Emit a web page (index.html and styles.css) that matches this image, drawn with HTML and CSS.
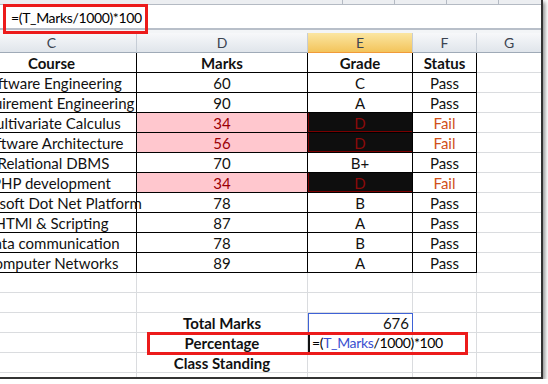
FILE: index.html
```html
<!DOCTYPE html>
<html>
<head>
	<meta charset="utf-8">
	<title>Marks sheet</title>
	<link rel="stylesheet" href="styles.css">
</head>
<body>

	<div class="frame">
		<div class="ribbon">
			<span class="sep"></span><span class="sep"></span><span class="sep"></span><span class="sep"></span>
		</div>
		<div class="fx">=(T_Marks/1000)*100</div>
		<div class="fx-gap"></div>

		<div class="sheet">
			<!-- column headers -->
			<div class="hd">C</div>
			<div class="hd">D</div>
			<div class="hd hd-on">E</div>
			<div class="hd">F</div>
			<div class="hd">G</div>

			<div class="c t b">Course</div>
			<div class="c t b">Marks</div>
			<div class="c t b">Grade</div>
			<div class="c t b">Status</div>
			<div class="c"></div>

			<div class="c t">Software Engineering</div>
			<div class="c t">60</div>
			<div class="c t">C</div>
			<div class="c t">Pass</div>
			<div class="c"></div>

			<div class="c t">Requirement Engineering</div>
			<div class="c t">90</div>
			<div class="c t">A</div>
			<div class="c t">Pass</div>
			<div class="c"></div>

			<div class="c t">Multivariate Calculus</div>
			<div class="c t low">34</div>
			<div class="c t dark">D</div>
			<div class="c t fail">Fail</div>
			<div class="c"></div>

			<div class="c t">Software Architecture</div>
			<div class="c t low">56</div>
			<div class="c t dark">D</div>
			<div class="c t fail">Fail</div>
			<div class="c"></div>

			<div class="c t">&nbsp;Relational DBMS</div>
			<div class="c t">70</div>
			<div class="c t">B+</div>
			<div class="c t">Pass</div>
			<div class="c"></div>

			<div class="c t">PHP development</div>
			<div class="c t low">34</div>
			<div class="c t dark">D</div>
			<div class="c t fail">Fail</div>
			<div class="c"></div>

			<div class="c t">Microsoft Dot Net Platform</div>
			<div class="c t">78</div>
			<div class="c t">B</div>
			<div class="c t">Pass</div>
			<div class="c"></div>

			<div class="c t">HTMl &amp; Scripting</div>
			<div class="c t">87</div>
			<div class="c t">A</div>
			<div class="c t">Pass</div>
			<div class="c"></div>

			<div class="c t">Data communication</div>
			<div class="c t">78</div>
			<div class="c t">B</div>
			<div class="c t">Pass</div>
			<div class="c"></div>

			<div class="c t">Computer Networks</div>
			<div class="c t">89</div>
			<div class="c t">A</div>
			<div class="c t">Pass</div>
			<div class="c"></div>

			<div class="c"></div><div class="c"></div><div class="c"></div><div class="c"></div><div class="c"></div>
			<div class="c"></div><div class="c"></div><div class="c"></div><div class="c"></div><div class="c"></div>

			<div class="c"></div>
			<div class="c b">Total Marks</div>
			<div class="c total">676</div>
			<div class="c"></div>
			<div class="c"></div>

			<div class="c"></div>
			<div class="c b">Percentage</div>
			<div class="c edit">=(<span class="ref">T_Marks</span><span class="caret"></span>/1000)*100</div>
			<div class="c"></div>
			<div class="c"></div>

			<div class="c"></div>
			<div class="c b">Class Standing</div>
			<div class="c"></div>
			<div class="c"></div>
			<div class="c"></div>

			<div class="c"></div><div class="c"></div><div class="c"></div><div class="c"></div><div class="c"></div>
		</div>

		<!-- red highlight boxes -->
		<div class="mark mark-fx"></div>
		<div class="mark mark-row"></div>
	</div>

</body>
</html>
```

FILE: styles.css
```css
body {
	margin: 0;
	background: #fff;
	font-family: "Lato", "Liberation Sans", sans-serif;
	font-size: 15px;
	color: #111;
}

.frame {
	position: relative;
	width: 541px;
	height: 377px;
	overflow: hidden;
	border-right: 2px solid #333;
	border-bottom: 2px solid #333;
	box-shadow: 2px 2px 4px rgba(0, 0, 0, 0.45);
}

.ribbon {
	display: flex;
	height: 4px;
	background: #eceef1;
	border-bottom: 1px solid #b4bac3;
	padding-left: 342px;
	gap: 51px;
}

.sep {
	width: 1px;
	background: #b4bac3;
}

.fx {
	height: 23px;
	line-height: 25px;
	padding-left: 11px;
	border-bottom: 2px solid #b8bfc9;
	color: #000;
	font-size: 14px;
	letter-spacing: -0.35px;
}

.fx-gap {
	height: 3px;
	background: #f3f5f7;
}

.sheet {
	display: grid;
	grid-template-columns: 170px 171px 105px 64px 65px;
	margin-left: -33px;
}

.hd,
.c {
	box-sizing: border-box;
	height: 20px;
	display: flex;
	align-items: center;
	justify-content: center;
	white-space: nowrap;
}

.hd {
	background: linear-gradient(#f7f8fa, #e0e5eb);
	border-right: 1px solid #c6cdd6;
	border-bottom: 1px solid #9faab7;
	color: #3b4350;
	font-size: 14px;
}

.hd-on {
	background: linear-gradient(#fbe6a2, #f3c45b);
	border-bottom-color: #f19a38;
}

.c {
	border-right: 1px solid #dadcdf;
	border-bottom: 1px solid #dadcdf;
}

.c.t {
	border-right-color: #000;
	border-bottom-color: #000;
}

.b {
	font-weight: bold;
}

.low {
	background: #ffc7ce;
	color: #9c0006;
}

.dark {
	background: #0e0e0e;
	color: #8a0a0a;
	box-shadow: inset 1px 0 0 #7a0000, inset 0 -1px 0 #7a0000;
}

.fail {
	color: #d0501a;
}

.total {
	justify-content: flex-end;
	padding-right: 3px;
	border: 1px solid #3e62d6;
}

.edit {
	justify-content: flex-start;
	overflow: visible;
	padding-left: 2px;
	border-left: 2px solid #111;
	color: #000;
	position: relative;
	z-index: 1;
	font-size: 14px;
	letter-spacing: -0.35px;
}

.ref {
	color: #3a4fd0;
}

.caret {
	display: inline-block;
	width: 1px;
	height: 18px;
	background: #000;
}

.mark {
	position: absolute;
	border: 3px solid #ec1b1b;
	box-sizing: border-box;
	z-index: 2;
}

.mark-fx {
	left: 3px;
	top: 4px;
	width: 145px;
	height: 30px;
}

.mark-row {
	left: 147px;
	top: 332px;
	width: 321px;
	height: 23px;
}
```
